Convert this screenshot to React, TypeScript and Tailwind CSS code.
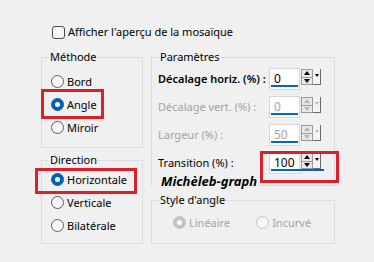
import React from 'react';

const FONT = { fontFamily: '"Noto Sans", "Open Sans", sans-serif' };

function Radio({ label, checked, disabled }: { label: string; checked?: boolean; disabled?: boolean }) {
  const dot = checked
    ? disabled
      ? 'bg-[#c4c4c4] border-[#c4c4c4]'
      : 'bg-[#005fb8] border-[#005fb8]'
    : disabled
      ? 'bg-[#f5f5f5] border-[#c4c4c4]'
      : 'bg-[#f7f7f7] border-[#5a5a5a]';
  return (
    <div className="flex h-[23px] items-center gap-[3px] whitespace-nowrap">
      <span className={`flex h-[13px] w-[13px] items-center justify-center rounded-full border ${dot}`}>
        {checked && <span className="h-[5px] w-[5px] rounded-full bg-white" />}
      </span>
      <span className={disabled ? 'text-[#a3a3a3]' : 'text-black'}>{label}</span>
    </div>
  );
}

function Tri({ up, color }: { up?: boolean; color: string }) {
  return up ? (
    <span className={`h-0 w-0 border-x-[3px] border-b-[4px] border-x-transparent ${color}`} />
  ) : (
    <span className={`h-0 w-0 border-x-[3px] border-t-[4px] border-x-transparent ${color}`} />
  );
}

function Spin({ value, disabled, focus }: { value: string; disabled?: boolean; focus?: boolean }) {
  const up = disabled ? 'border-b-[#b5b5b5]' : 'border-b-black';
  const dn = disabled ? 'border-t-[#b5b5b5]' : 'border-t-black';
  return (
    <div className="relative flex h-[22px] items-start">
      <div className="h-[22px] w-[31px] border border-[#d6d6d6] bg-white pl-[4px] text-[12px] leading-[19px]">
        <span className={disabled ? 'text-[#a3a3a3]' : 'text-black'}>{value}</span>
      </div>
      <div className="mt-[1px] ml-[1px] flex h-[16px] w-[12px] flex-col border border-[#9a9a9a] bg-[#e9e9e9]">
        <div className="flex flex-1 items-center justify-center border-b border-[#9a9a9a]">
          <Tri up color={up} />
        </div>
        <div className="flex flex-1 items-center justify-center">
          <Tri color={dn} />
        </div>
      </div>
      <div className="mt-[1px] flex h-[16px] w-[8px] items-start justify-center border-r border-b border-[#6a6a6a] bg-[#f4f4f4] pt-[5px]">
        <span className={`h-0 w-0 border-x-[2px] border-t-[3px] border-x-transparent ${dn}`} />
      </div>
      <div className={`absolute bottom-[3px] left-[2px] h-[2px] bg-[#0a64b4] ${focus ? 'w-[53px]' : 'w-[27px]'}`} />
    </div>
  );
}

function Row({ label, value, disabled, bold, focus }: { label: string; value: string; disabled?: boolean; bold?: boolean; focus?: boolean }) {
  return (
    <div className="flex h-[28px] items-start">
      <div className="flex h-[22px] w-[111px] items-center whitespace-nowrap">
        <span className={`${disabled ? 'text-[#a3a3a3]' : 'text-black'} ${bold ? 'font-semibold' : ''}`}>{label}</span>
      </div>
      <Spin value={value} disabled={disabled} focus={focus} />
    </div>
  );
}

function Group({ title, className, children }: { title: string; className: string; children: React.ReactNode }) {
  return (
    <div className={`relative border border-[#dcdcdc] ${className}`}>
      <span className="absolute -top-[9px] left-[7px] whitespace-nowrap bg-[#f0f0f0] px-[1px] leading-[16px] text-black">{title}</span>
      {children}
    </div>
  );
}

export default function App() {
  return (
    <div className="h-[262px] w-[374px] bg-[#f0f0f0] text-[11px] leading-[16px]" style={FONT}>
      <div className="flex items-center gap-[3px] pt-[24px] pl-[52px]">
        <span className="h-[13px] w-[13px] rounded-[3px] border border-[#4a4a4a] bg-[#f7f7f7]" />
        <span className="whitespace-nowrap text-black">Afficher l'aperçu de la mosaïque</span>
      </div>

      <div className="mt-[17px] flex gap-[8px] pl-[41px]">
        {/* left column */}
        <div className="flex w-[102px] flex-col gap-[12px]">
          <Group title="Méthode" className="h-[91px] pt-[12px] pl-[9px]">
            <Radio label="Bord" />
            <Radio label="Angle" checked />
            <Radio label="Miroir" />
            <div className="absolute top-[31px] -left-[1px] h-[30px] w-[63px] border-[3px] border-[#d7222c]" />
          </Group>
          <Group title="Direction" className="h-[84px] pt-[7px] pl-[9px]">
            <Radio label="Horizontale" checked />
            <Radio label="Verticale" />
            <Radio label="Bilatérale" />
            <div className="absolute top-[7px] -left-[7px] h-[26px] w-[102px] border-[3px] border-[#d7222c]" />
          </Group>
        </div>

        {/* right column */}
        <div className="flex w-[184px] flex-col gap-[14px]">
          <Group title="Paramètres" className="h-[129px] pt-[10px] pl-[6px]">
            <Row label="Décalage horiz. (%) :" value="0" bold />
            <Row label="Décalage vert. (%) :" value="0" disabled />
            <Row label="Largeur (%) :" value="50" disabled />
            <Row label="Transition (%) :" value="100" focus />
            <div className="absolute top-[93px] left-[108px] h-[32px] w-[79px] border-[3px] border-[#d7222c]" />
            <div className="absolute top-[114px] left-[1px] h-[18px] w-[106px] whitespace-nowrap bg-[#f0f0f0] pl-[8px] text-[13px] leading-[18px] font-bold italic text-black">
              Michèleb-graph
            </div>
          </Group>
          <Group title="Style d'angle" className="h-[44px] pt-[10px] pl-[21px]">
            <div className="flex gap-[26px]">
              <Radio label="Linéaire" checked disabled />
              <Radio label="Incurvé" disabled />
            </div>
          </Group>
        </div>
      </div>
    </div>
  );
}
